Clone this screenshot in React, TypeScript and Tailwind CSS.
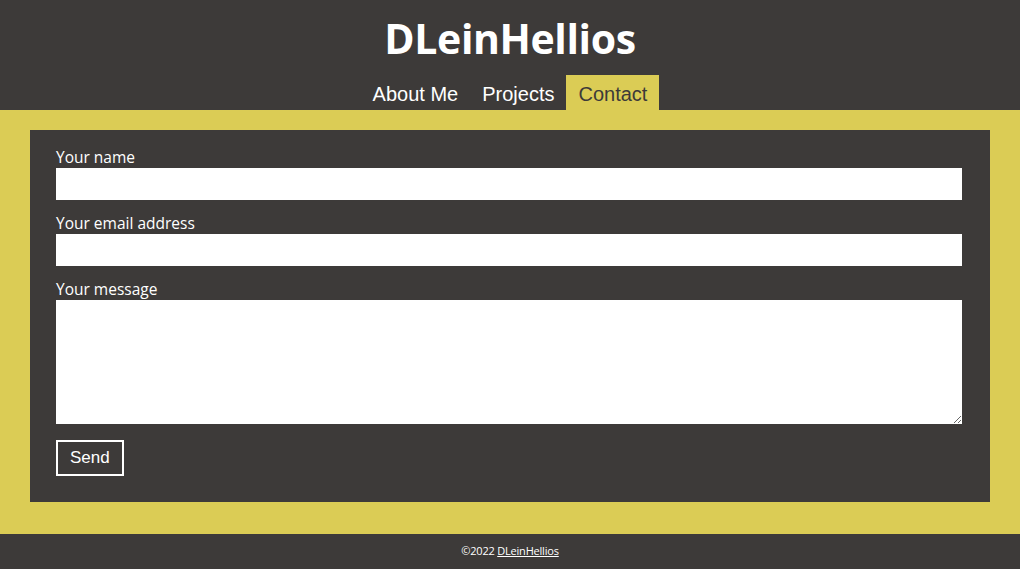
import * as React from "react";

const navItems = [
  { label: "About Me", active: false },
  { label: "Projects", active: false },
  { label: "Contact", active: true },
];

function Field({ label, children }: { label: string; children: React.ReactNode }) {
  return (
    <div className="flex flex-col">
      <label className="text-[15.5px] leading-[22px] text-white">{label}</label>
      {children}
    </div>
  );
}

export default function App() {
  return (
    <div
      className="flex min-h-[569px] flex-col bg-[#dbcc55]"
      style={{ fontFamily: "'Open Sans', 'Noto Sans', sans-serif" }}
    >
      <header className="bg-[#3d3a39]">
        <div className="flex h-[75px] items-center justify-center pt-0.5">
          <h1 className="text-[41px] font-bold leading-none tracking-[-0.4px] text-white">
            DLeinHellios
          </h1>
        </div>
        <nav className="flex justify-center font-['Liberation_Sans',Arial,sans-serif]">
          {navItems.map((item) => (
            <a
              key={item.label}
              href="#"
              className={
                item.active
                  ? "flex h-[35px] items-center bg-[#dbcc55] px-3 pt-0.5 text-[20px] text-[#3d3a39]"
                  : "flex h-[35px] items-center px-3 pt-0.5 text-[20px] text-white"
              }
            >
              {item.label}
            </a>
          ))}
        </nav>
      </header>

      <main className="px-[30px] pt-5 pb-8">
        <form className="flex flex-col gap-3 bg-[#3d3a39] pt-4 pr-[28px] pb-[26px] pl-[26px]">
          <Field label="Your name">
            <input type="text" className="h-8 w-full border-0 bg-white px-2 outline-none" />
          </Field>
          <Field label="Your email address">
            <input type="email" className="h-8 w-full border-0 bg-white px-2 outline-none" />
          </Field>
          <Field label="Your message">
            <textarea className="h-[124px] w-full border-0 bg-white px-2 outline-none" />
          </Field>
          <div className="pt-1">
            <button
              type="button"
              className="h-9 border-2 border-white px-3 font-['Liberation_Sans',Arial,sans-serif] text-[17px] text-white"
            >
              Send
            </button>
          </div>
        </form>
      </main>

      <footer className="flex h-[35px] items-center justify-center bg-[#3d3a39] text-[11px] tracking-[-0.2px] text-white">
        <span>
          ©2022 <a href="#" className="underline">DLeinHellios</a>
        </span>
      </footer>
    </div>
  );
}
